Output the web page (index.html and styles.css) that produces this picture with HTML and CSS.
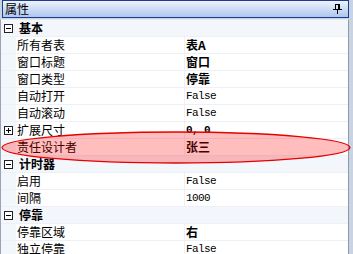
FILE: index.html
```html
<!DOCTYPE html>
<html>
<head>
<meta charset="utf-8">
<link rel="stylesheet" href="styles.css">
</head>
<body>
<div class="panel">
  <div class="title">
    <span class="title-text">属性</span>
    <svg class="pin" width="9" height="10" viewBox="0 0 9 10">
      <rect x="2.5" y="0.5" width="4" height="5" fill="none" stroke="#000"/>
      <rect x="5" y="0" width="2" height="6" fill="#000"/>
      <rect x="0" y="5" width="9" height="1" fill="#000"/>
      <rect x="4" y="6" width="1" height="4" fill="#000"/>
    </svg>
  </div>
  <div class="grid">
    <div class="row cat"><span class="tog"><i class="h"></i></span><span class="catname">基本</span></div>
    <div class="row prop"><span class="gut"></span><span class="name">所有者表</span><span class="val bold">表A</span></div>
    <div class="row prop"><span class="gut"></span><span class="name">窗口标题</span><span class="val bold">窗口</span></div>
    <div class="row prop"><span class="gut"></span><span class="name">窗口类型</span><span class="val bold">停靠</span></div>
    <div class="row prop"><span class="gut"></span><span class="name">自动打开</span><span class="val mono">False</span></div>
    <div class="row prop"><span class="gut"></span><span class="name">自动滚动</span><span class="val mono">False</span></div>
    <div class="row prop"><span class="gut"><span class="tog small"><i class="h"></i><i class="v"></i></span></span><span class="name">扩展尺寸</span><span class="val mono bold">0, 0</span></div>
    <div class="row prop"><span class="gut"></span><span class="name">责任设计者</span><span class="val bold">张三</span></div>
    <div class="row cat"><span class="tog"><i class="h"></i></span><span class="catname">计时器</span></div>
    <div class="row prop"><span class="gut"></span><span class="name">启用</span><span class="val mono">False</span></div>
    <div class="row prop"><span class="gut"></span><span class="name">间隔</span><span class="val mono">1000</span></div>
    <div class="row cat"><span class="tog"><i class="h"></i></span><span class="catname">停靠</span></div>
    <div class="row prop"><span class="gut"></span><span class="name">停靠区域</span><span class="val bold">右</span></div>
    <div class="row prop"><span class="gut"></span><span class="name">独立停靠</span><span class="val mono">False</span></div>
  </div>
  <svg class="mark" width="353" height="254" viewBox="0 0 353 254">
    <ellipse cx="176" cy="147.5" rx="174" ry="15.5" fill="rgba(255,0,0,0.26)" stroke="#e60000" stroke-width="1.3"/>
  </svg>
</div>
</body>
</html>
```

FILE: styles.css
```css
html, body {
  margin: 0;
  padding: 0;
  background: #ffffff;
}

.panel {
  position: relative;
  width: 353px;
  height: 254px;
  overflow: hidden;
  background: #c9d3e1;
  font-family: "Noto Sans CJK SC", "Liberation Sans", sans-serif;
  font-size: 12px;
  color: #000;
}

.title {
  margin-left: 2px;
  margin-right: 4px;
  height: 16px;
  border: 1px solid #1b3c8e;
  background: linear-gradient(#eef3fc 0%, #d3e1f6 40%, #aec6ee 100%);
  display: flex;
  align-items: center;
  justify-content: space-between;
  padding: 0 6px 0 2px;
}

.title-text {
  line-height: 16px;
}

.pin {
  display: block;
}

.grid {
  margin-top: 1px;
  margin-right: 4px;
  background: #ffffff;
  border-left: 1px solid #9aa4b3;
  border-right: 1px solid #8f9aab;
  border-top: 1px solid #e4e9f1;
  display: flex;
  flex-direction: column;
}

.row {
  height: 16px;
  border-bottom: 1px solid #edf1f7;
  display: flex;
  align-items: center;
  line-height: 16px;
  white-space: nowrap;
}

.cat {
  background: #f3f6fb;
}

.tog {
  position: relative;
  box-sizing: border-box;
  width: 9px;
  height: 9px;
  border: 1px solid #222;
  background: #fff;
  margin-left: 3px;
  flex: none;
}

.tog .h {
  position: absolute;
  left: 1px;
  top: 3px;
  width: 5px;
  height: 1px;
  background: #000;
}

.tog .v {
  position: absolute;
  left: 3px;
  top: 1px;
  width: 1px;
  height: 5px;
  background: #000;
}

.catname {
  font-weight: bold;
  margin-left: 6px;
}

.gut {
  width: 15px;
  height: 16px;
  background: #f3f6fb;
  flex: none;
  display: flex;
  align-items: center;
}

.gut .tog {
  margin-left: 3px;
}

.name {
  width: 167px;
  padding-left: 1px;
  height: 16px;
  border-right: 1px solid #edf1f7;
  flex: none;
  overflow: hidden;
}

.val {
  padding-left: 1px;
  height: 16px;
}

.bold {
  font-weight: bold;
}

.mono {
  font-family: "Liberation Mono", "DejaVu Sans Mono", monospace;
  font-size: 11px;
  letter-spacing: -0.6px;
}

.mark {
  position: absolute;
  left: 0;
  top: 0;
  pointer-events: none;
}
```
